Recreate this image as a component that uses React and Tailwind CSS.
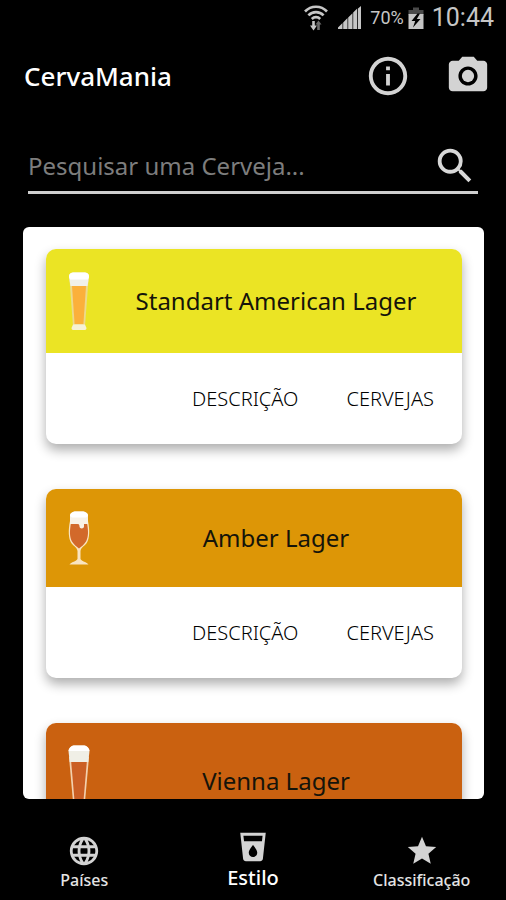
import { useState } from 'react';
import { MdCameraAlt, MdInfoOutline, MdLanguage, MdLocalDrink, MdSearch, MdStar } from 'react-icons/md';

const WifiIcon = () => (
    <svg className="w-6 h-7" viewBox="0 0 24 28" fill="none" stroke="#c6c6c6" strokeWidth="2.6">
        <path d="M1 7.5c6-6.4 16-6.4 22 0" />
        <path d="M4.4 11.4c4.2-4.4 11-4.4 15.2 0" />
        <path d="M7.8 15c2.4-2.5 6-2.5 8.4 0" />
        <path d="M9.5 17v6" />
        <path d="M6 21.5h7L9.5 26.5z" fill="#c6c6c6" stroke="none" />
        <path d="M14.5 20v6" stroke="#6b6b6b" />
        <path d="M11.5 20.5h6l-3-4z" fill="#6b6b6b" stroke="none" />
    </svg>
);

const SignalIcon = () => (
    <svg className="w-6 h-6" viewBox="0 0 24 24" fill="#c6c6c6">
        <path d="M0 23v-1.5L4.500 17v6zM5.200 23v-6.500L9.500 12v11zM10.200 23V11.500l4.300-4.300V23zM15.200 23V6.500l4-4V23zM20 23V2.500L23 0v23z" />
    </svg>
);

const BatteryIcon = () => (
    <svg className="w-4 h-6" viewBox="0 0 16 24">
        <path d="M.5 9V4H5V1.500h6V4h4.500v5z" fill="#4a4a4a" />
        <path d="M.5 8h15v15H.5z" fill="#c6c6c6" />
        <path d="M9.500 7.500 3.500 15h3.700L5 21.500 12.500 13H8.800L12 7.500z" fill="#000" />
    </svg>
);

const WeizenGlass = () => (
    <svg className="w-[22px] h-[60px] shrink-0" viewBox="0 0 22 60">
        <path d="M1.500 9h19L17 55H5z" fill="#ecd98c" />
        <path d="M4 15h14l-2.600 38H6.600z" fill="#fbb03b" />
        <path d="M1 6C1 2.500 3 1.500 6 1.500h10c3 0 5 1 5 4.500l-1.500 9h-17z" fill="#f1f1ea" />
        <path d="M1 6C1 2.500 3 1.500 6 1.500h10c3 0 5 1 5 4.500l-1 2.500H2z" fill="#fff" />
        <path d="M5 53.500h12l1.500 3.500c0 1.500-1 2-2 2h-11c-1 0-2-.5-2-2z" fill="#f6f1d4" />
    </svg>
);

const GobletGlass = () => (
    <svg className="w-[22px] h-[54px] shrink-0" viewBox="0 0 22 54">
        <path d="M2 10C0 20 .5 27 3 31.500c2 3.500 6 4.500 6.500 8.500v8c-1 2.500-6.500 3-8 5.500h19c-1.500-2.500-7-3-8-5.500v-8c.5-4 4.500-5 6.500-8.500C21.500 27 22 20 20 10z" fill="#f9e4c0" />
        <path d="M3 12C1.500 20 1.500 26 4 30.500c1.800 3 4.500 5 7 7 2.500-2 5.200-4 7-7C20.500 26 20.500 20 19 12z" fill="#d2692a" />
        <path d="M2 5C2 2 4.500.5 8 .5h6c3.500 0 6 1.500 6 4.500v8h-4v2.500c0 2.500-4.500 2.500-4.500 0C11.500 13 10 13 8.500 13H2z" fill="#f8f2e6" />
        <path d="M2 5C2 2 4.500.5 8 .5h6c3.500 0 6 1.500 6 4.500l-2 1.500H4z" fill="#fff" />
    </svg>
);

const PilsnerGlass = () => (
    <svg className="w-[22px] h-[72px] shrink-0" viewBox="0 0 22 72">
        <path d="M1 12h20L16 68H6z" fill="#f3d0ae" />
        <path d="M3.200 17h15.600L14.600 66H7.400z" fill="#cb5f24" />
        <path d="M.5 6C1 2.500 3.500.5 7 .5h8c3.500 0 6 2 6.500 5.500l-1.200 11H1.700z" fill="#f0efe6" />
        <path d="M.5 6C1 2.500 3.500.5 7 .5h8c3.500 0 6 2 6.500 5.500H.5z" fill="#fff" />
        <path d="M5 67h12v4H5z" fill="#f0efe6" />
    </svg>
);

const styles = [
    { name: 'Standart American Lager', header: 'bg-[#ebe424]', Glass: WeizenGlass },
    { name: 'Amber Lager', header: 'bg-[#dd9606]', Glass: GobletGlass },
    { name: 'Vienna Lager', header: 'bg-[#ca6110]', Glass: PilsnerGlass },
];

const tabs = [
    { label: 'Países', Icon: MdLanguage },
    { label: 'Estilo', Icon: MdLocalDrink },
    { label: 'Classificação', Icon: MdStar },
];

const StyleCard = ({ name, header, Glass }) => (
    <article className="shrink-0 rounded-[10px] bg-white shadow-[0_6px_12px_rgba(0,0,0,0.32)]">
        <div className={`flex items-center rounded-t-[10px] py-[22px] pl-[22px] ${header}`}>
            <Glass />
            <h2 className="flex-1 text-center text-2xl text-[#15140a]">{name}</h2>
        </div>
        <div className="flex h-[91px] items-center justify-end gap-12 pr-7 text-xl font-light text-black">
            <button type="button">DESCRIÇÃO</button>
            <button type="button">CERVEJAS</button>
        </div>
    </article>
);

const App = () => {
    const [search, setSearch] = useState('');
    const [activeTab, setActiveTab] = useState('Estilo');

    return (
        <div className="flex h-screen flex-col bg-black font-['Noto_Sans',sans-serif]">
            <div className="flex h-9 shrink-0 items-center justify-end pr-3 font-['Roboto',sans-serif] text-[#c6c6c6]">
                <WifiIcon />
                <span className="ml-2.5"><SignalIcon /></span>
                <span className="ml-2 mr-1 text-lg">70%</span>
                <BatteryIcon />
                <span className="ml-2 text-[25px]">10:44</span>
            </div>

            <header className="flex h-20 shrink-0 items-center pl-6 pr-[15px]">
                <h1 className="flex-1 text-[26px] font-medium text-white">CervaMania</h1>
                <div className="flex gap-[34px] text-[46px] text-[#d3d3d3]">
                    <button type="button" aria-label="Informações"><MdInfoOutline /></button>
                    <button type="button" aria-label="Câmera"><MdCameraAlt /></button>
                </div>
            </header>

            <form
                className="mx-7 mt-[27px] flex shrink-0 items-center border-b-3 border-[#cfcfcf] pb-0.5"
                onSubmit={(e) => e.preventDefault()}
            >
                <input
                    type="text"
                    aria-label="Pesquisar uma Cerveja"
                    className="min-w-0 flex-1 bg-transparent text-2xl text-white outline-none placeholder:text-[#7d7d7d]"
                    placeholder="Pesquisar uma Cerveja..."
                    value={search}
                    onChange={(e) => setSearch(e.target.value)}
                />
                <button type="submit" aria-label="Pesquisar" className="text-[46px] text-[#d8d8d8]"><MdSearch /></button>
            </form>

            <main className="ml-[23px] mr-[22px] mt-[33px] flex min-h-0 flex-1 flex-col gap-[45px] overflow-y-auto rounded-md bg-white py-[22px] pl-[23px] pr-[22px] [scrollbar-width:none]">
                {styles.map((style) => <StyleCard key={style.name} {...style} />)}
            </main>

            <nav className="grid h-[101px] shrink-0 grid-cols-3">
                {tabs.map(({ label, Icon }) => (
                    <button
                        key={label}
                        type="button"
                        onClick={() => setActiveTab(label)}
                        className="flex flex-col items-center justify-end pb-2 font-medium"
                    >
                        <Icon className="size-[34px] text-[#d3d3d3]" />
                        <span className={activeTab === label ? 'text-xl leading-7 text-white' : 'text-base leading-6 text-[#e4e4e4]'}>
                            {label}
                        </span>
                    </button>
                ))}
            </nav>
        </div>
    );
};

export default App;
